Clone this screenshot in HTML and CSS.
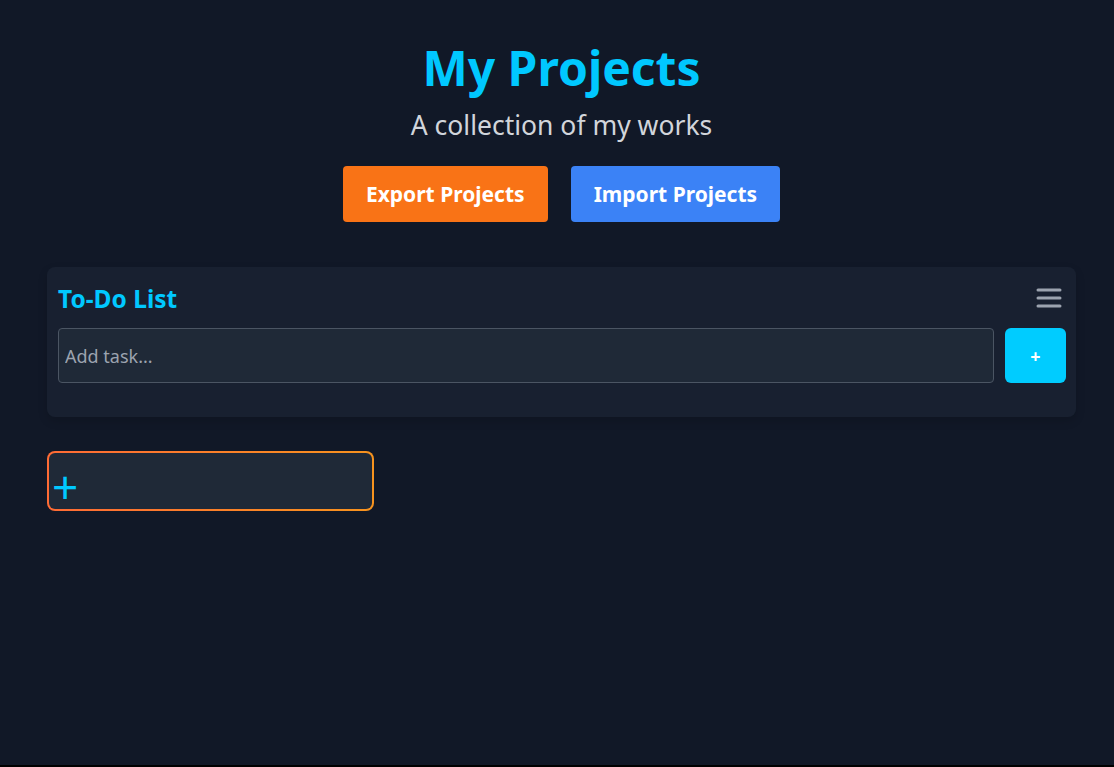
FILE: index.html
```html
<!DOCTYPE html>
<html lang="en">
<head>
<meta charset="utf-8">
<title>My Projects</title>
<link rel="stylesheet" href="styles.css">
</head>
<body>
<div class="page">
  <header class="hero">
    <h1 class="title">My Projects</h1>
    <p class="subtitle">A collection of my works</p>
    <div class="actions">
      <button class="btn btn-export">Export Projects</button>
      <button class="btn btn-import">Import Projects</button>
    </div>
  </header>
  <main class="content">
    <section class="todo">
      <div class="todo-head">
        <h2 class="todo-title">To-Do List</h2>
        <button class="menu" aria-label="menu">
          <svg width="26" height="22" viewBox="0 0 26 22"><g stroke="#9ca3af" stroke-width="3" stroke-linecap="round"><line x1="2" y1="3" x2="24" y2="3"/><line x1="2" y1="11" x2="24" y2="11"/><line x1="2" y1="19" x2="24" y2="19"/></g></svg>
        </button>
      </div>
      <div class="todo-row">
        <input class="todo-input" type="text" placeholder="Add task...">
        <button class="todo-add">+</button>
      </div>
    </section>
    <div class="new-card"><span class="new-plus">+</span></div>
  </main>
</div>
</body>
</html>
```
FILE: styles.css
```css
html, body {
  margin: 0;
  padding: 0;
  background: #000;
}
body {
  font-family: "Noto Sans", "Open Sans", sans-serif;
  color: #e5e7eb;
}
.page {
  background: #111827;
  height: 765px;
  box-sizing: border-box;
  padding: 0 38px 0 47px;
}
.hero {
  display: flex;
  flex-direction: column;
  align-items: center;
  padding-top: 36px;
}
.title {
  margin: 0;
  font-size: 48px;
  line-height: 64px;
  font-weight: 700;
  color: #00c8ff;
}
.subtitle {
  margin: 0;
  margin-top: 7px;
  font-size: 26.5px;
  line-height: 36px;
  color: #d1d5db;
}
.actions {
  display: flex;
  gap: 23px;
  margin-top: 23px;
}
.btn {
  border: none;
  border-radius: 4px;
  height: 56px;
  padding: 0 23px;
  font-family: inherit;
  font-size: 21px;
  font-weight: 700;
  color: #fff;
}
.btn-export { background: #f97316; }
.btn-import { background: #3b82f6; }
.content {
  margin-top: 45px;
}
.todo {
  background: #182030;
  border-radius: 8px;
  padding: 14px 10px 34px 11px;
  box-shadow: 0 4px 10px rgba(0,0,0,0.15);
}
.todo-head {
  display: flex;
  justify-content: space-between;
  align-items: center;
  height: 34px;
  margin-bottom: 13px;
}
.todo-title {
  margin: 0;
  font-size: 24.5px;
  font-weight: 700;
  color: #00c8ff;
}
.menu {
  background: none;
  border: none;
  padding: 0;
  margin-right: 4px;
  display: flex;
}
.todo-row {
  display: flex;
  gap: 11px;
}
.todo-input {
  flex: 1;
  height: 55px;
  box-sizing: border-box;
  background: #1f2937;
  border: 1px solid #4b5563;
  border-radius: 4px;
  padding: 0 6px;
  font-family: inherit;
  font-size: 18px;
  color: #e5e7eb;
}
.todo-input::placeholder { color: #9ca3af; }
.todo-add {
  width: 61px;
  height: 55px;
  border: none;
  border-radius: 6px;
  background: #00ccff;
  color: #fff;
  font-family: inherit;
  font-size: 18px;
  font-weight: 700;
}
.new-card {
  margin-top: 34px;
  width: 327px;
  height: 60px;
  box-sizing: border-box;
  border: 2px solid transparent;
  border-radius: 8px;
  background: linear-gradient(#1f2937, #1f2937) padding-box,
              linear-gradient(90deg, #ff6b35, #f7931e) border-box;
  display: flex;
  align-items: center;
  padding-left: 3px;
}
.new-plus {
  color: #00c8ff;
  font-size: 46px;
  line-height: 46px;
  font-weight: 400;
  margin-top: 10px;
}
```
